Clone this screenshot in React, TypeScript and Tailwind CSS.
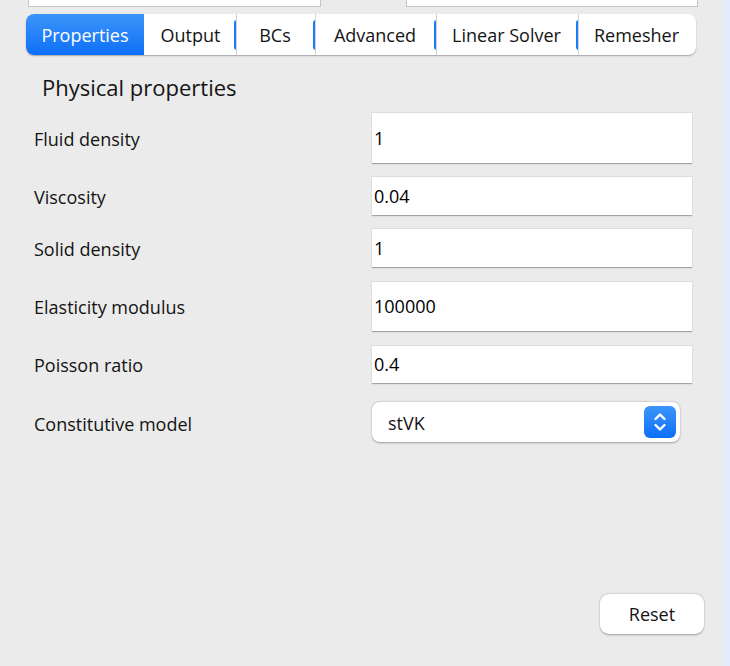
import React from "react";

const fields = [
  { label: "Fluid density", value: "1", h: "h-[51px]", mt: "mt-0" },
  { label: "Viscosity", value: "0.04", h: "h-[39px]", mt: "mt-[13px]" },
  { label: "Solid density", value: "1", h: "h-[39px]", mt: "mt-[13px]" },
  { label: "Elasticity modulus", value: "100000", h: "h-[50px]", mt: "mt-[14px]" },
  { label: "Poisson ratio", value: "0.4", h: "h-[38px]", mt: "mt-[14px]" },
];

function Separator() {
  return (
    <div className="relative h-full w-[3px] flex items-center">
      <div className="h-[30px] w-[3px] rounded-l-full bg-[#1a7cf7]" />
      <div className="absolute right-0 top-0 h-full w-px bg-[#d4d4d4]" />
    </div>
  );
}

export default function App() {
  return (
    <div className="w-[730px] h-[666px] flex bg-[#ebebeb] text-[#141414] overflow-hidden" style={{ fontFamily: '"Open Sans", "Noto Sans", sans-serif' }}>
      <div className="w-[722px] h-full relative">
        {/* top inputs, cut off */}
        <div className="flex h-[7px]">
          <div className="ml-[28px] w-[293px] h-[7px] bg-white border border-t-0 border-[#c6c6c6]" />
          <div className="ml-[85px] w-[292px] h-[7px] bg-white border border-t-0 border-[#c6c6c6]" />
        </div>

        {/* tabs */}
        <div className="mt-[7px] ml-[26px] w-[670px] h-[41px] flex items-stretch bg-white rounded-[8px] shadow-[0_1px_1.5px_rgba(0,0,0,0.3)] text-[18px]">
          <div className="w-[118px] pt-[1px] rounded-l-[8px] bg-gradient-to-b from-[#3b94fb] to-[#0a6ff7] text-white flex items-center justify-center">
            Properties
          </div>
          <div className="w-[90px] pt-[1px] flex items-center justify-center pl-[3px]">Output</div>
          <Separator />
          <div className="w-[76px] pt-[1px] flex items-center justify-center">BCs</div>
          <Separator />
          <div className="w-[118px] pt-[1px] flex items-center justify-center">Advanced</div>
          <Separator />
          <div className="w-[139px] pt-[1px] flex items-center justify-center">Linear Solver</div>
          <Separator />
          <div className="flex-1 pt-[1px] flex items-center justify-center pr-[2px]">Remesher</div>
        </div>

        <h2 className="ml-[42px] mt-[17px] text-[22px] leading-[30px]">Physical properties</h2>

        <div className="mt-[10px] ml-[34px] flex flex-col">
          {fields.map((f) => (
            <div key={f.label} className={`flex items-center ${f.mt}`}>
              <div className="w-[338px] pt-[3px] text-[18px]">{f.label}</div>
              <div className={`w-[320px] ${f.h} bg-white border-t border-[#dcdcdc] shadow-[0_1px_1px_rgba(0,0,0,0.3)] flex items-center pl-[2px] text-[18px] text-black`}>
                {f.value}
              </div>
            </div>
          ))}
          <div className="flex items-center mt-[19px]">
            <div className="w-[338px] pt-[5px] text-[18px]">Constitutive model</div>
            <div className="w-[308px] h-[40px] bg-white rounded-[8px] shadow-[0_0.5px_2px_rgba(0,0,0,0.35)] flex items-center justify-between pl-[16px] pr-[4px] text-[18px]">
              <span className="pt-[2px]">stVK</span>
              <div className="w-[32px] h-[32px] rounded-[6px] bg-gradient-to-b from-[#3b94fb] to-[#0a6ff7] flex items-center justify-center">
                <svg width="14" height="22" viewBox="0 0 14 22" fill="none" stroke="white" strokeWidth="2.4" strokeLinecap="round" strokeLinejoin="round">
                  <path d="M2.5 8 L7 3.5 L11.5 8" />
                  <path d="M2.5 14 L7 18.5 L11.5 14" />
                </svg>
              </div>
            </div>
          </div>
        </div>

        <button className="absolute left-[600px] top-[594px] w-[104px] h-[40px] bg-white rounded-[9px] shadow-[0_0.5px_2px_rgba(0,0,0,0.35)] text-[18px]">
          Reset
        </button>
      </div>
      <div className="w-[8px] h-full bg-[#e4eefb]" />
    </div>
  );
}
